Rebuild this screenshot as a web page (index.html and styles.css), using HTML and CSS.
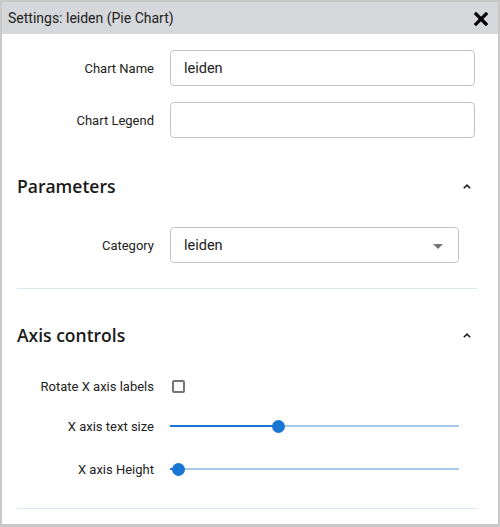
FILE: index.html
```html
<!DOCTYPE html>
<html>
<head>
<meta charset="utf-8">
<link rel="stylesheet" href="styles.css">
</head>
<body>
<div class="dialog">
  <div class="titlebar">
    <span class="title">Settings: leiden (Pie Chart)</span>
    <svg class="close" width="14" height="14" viewBox="0 0 14 14"><path d="M2 2 L12 12 M12 2 L2 12" stroke="#000" stroke-width="3.2" stroke-linecap="square" fill="none"/></svg>
  </div>
  <div class="content">
    <div class="row row-first">
      <label class="lbl">Chart Name</label>
      <div class="input wide">leiden</div>
    </div>
    <div class="row">
      <label class="lbl">Chart Legend</label>
      <div class="input wide"></div>
    </div>

    <div class="section-head sh-params">
      <span>Parameters</span>
      <svg class="chev" width="10" height="7" viewBox="0 0 10 7"><path d="M1.8 5.3 L5 2.1 L8.2 5.3" stroke="#222" stroke-width="1.6" fill="none"/></svg>
    </div>
    <div class="row row-cat">
      <label class="lbl">Category</label>
      <div class="input select">leiden<span class="caret"></span></div>
    </div>
    <div class="divider div-1"></div>

    <div class="section-head sh-axis">
      <span>Axis controls</span>
      <svg class="chev" width="10" height="7" viewBox="0 0 10 7"><path d="M1.8 5.3 L5 2.1 L8.2 5.3" stroke="#222" stroke-width="1.6" fill="none"/></svg>
    </div>
    <div class="row small r-rotate">
      <label class="lbl">Rotate X axis labels</label>
      <span class="checkbox"></span>
    </div>
    <div class="row small r-size">
      <label class="lbl">X axis text size</label>
      <div class="slider"><div class="track-on" style="width:37.4%"></div><div class="thumb" style="left:37.4%"></div></div>
    </div>
    <div class="row small r-height">
      <label class="lbl">X axis Height</label>
      <div class="slider"><div class="track-on" style="width:2.8%"></div><div class="thumb" style="left:2.8%"></div></div>
    </div>
    <div class="divider div-2"></div>
  </div>
</div>
</body>
</html>
```
FILE: styles.css
```css
html, body {
  margin: 0;
  padding: 0;
}
body {
  background: #c8c8c8;
  width: 500px;
  height: 527px;
  overflow: hidden;
  font-family: Roboto, "Liberation Sans", sans-serif;
  color: #222;
}
.dialog {
  margin: 2px 2px 0 2px;
  width: 496px;
  height: 522px;
  background: #fff;
  display: flex;
  flex-direction: column;
}
.titlebar {
  height: 32px;
  background: #d6d7db;
  display: flex;
  align-items: center;
  justify-content: space-between;
  padding: 0 10px 0 6px;
}
.title {
  font-size: 14px;
  color: #222;
}
.close {
  display: block;
  margin-top: 1px;
}
.content {
  padding: 0 21px 0 15px;
  display: flex;
  flex-direction: column;
}
.row {
  display: flex;
  align-items: center;
  height: 36px;
  margin-top: 16px;
}
.lbl {
  width: 137px;
  text-align: right;
  font-size: 13px;
  color: #222;
  margin-right: 16px;
  flex: none;
}
.input {
  box-sizing: border-box;
  height: 36px;
  border: 1px solid #c4c4c4;
  border-radius: 4px;
  font-size: 14.5px;
  color: #222;
  padding-left: 13px;
  display: flex;
  align-items: center;
}
.wide {
  width: 305px;
}
.select {
  width: 289px;
  position: relative;
}
.caret {
  position: absolute;
  right: 15px;
  top: 16px;
  width: 0;
  height: 0;
  border-left: 5px solid transparent;
  border-right: 5px solid transparent;
  border-top: 5px solid #757575;
}
.section-head {
  display: flex;
  align-items: center;
  justify-content: space-between;
  height: 24px;
  font-family: "Open Sans", "Noto Sans", sans-serif;
  font-weight: 600;
  font-size: 17.5px;
  color: #1a1a1a;
  padding-right: 5px;
}
.chev { display: block; }
.sh-params { margin-top: 36px; }
.row-cat { margin-top: 29px; }
.divider {
  height: 1px;
  background: #dde6ee;
}
.div-1 { margin-top: 25px; }
.sh-axis { margin-top: 34px; }
.row.small { height: 24px; }
.r-rotate { margin-top: 27px; }
.r-size { margin-top: 16px; }
.r-height { margin-top: 19px; }
.div-2 { margin-top: 27px; }
.checkbox {
  box-sizing: border-box;
  width: 13px;
  height: 13px;
  border: 2px solid #767676;
  border-radius: 2px;
  margin-left: 2px;
}
.slider {
  position: relative;
  width: 289px;
  height: 2px;
  background: #a7c9ec;
}
.track-on {
  position: absolute;
  left: 0;
  top: 0;
  height: 2px;
  background: #1976d2;
}
.thumb {
  position: absolute;
  top: 1px;
  width: 13px;
  height: 13px;
  margin: -6.5px 0 0 -6.5px;
  border-radius: 50%;
  background: #1976d2;
}
```
